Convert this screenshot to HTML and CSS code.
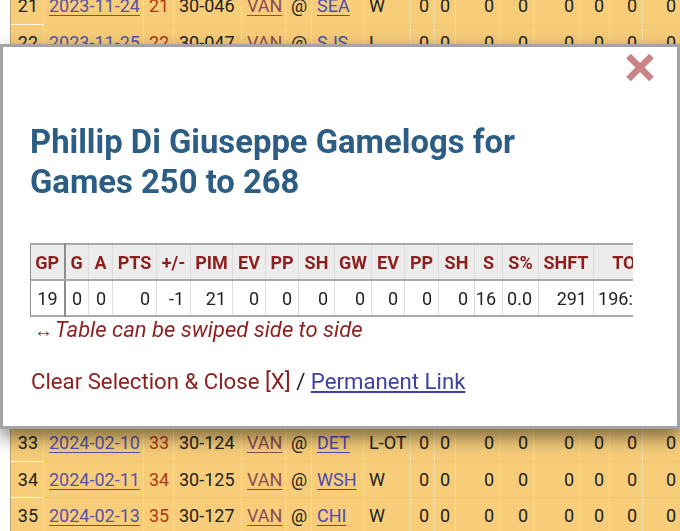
FILE: index.html
```html
<!DOCTYPE html>
<html lang="en">
<head>
<meta charset="utf-8">
<title>Phillip Di Giuseppe Gamelogs</title>
<link rel="stylesheet" href="styles.css">
</head>
<body>
<div class="page">
  <table class="log">
    <colgroup>
      <col class="c1"><col class="c2"><col class="c3"><col class="c4"><col class="c5"><col class="c6"><col class="c7"><col class="c8"><col class="c9"><col class="c10"><col class="c11"><col class="c12"><col class="c13"><col class="c14"><col class="c15"><col class="c16"><col class="c17"><col class="c17">
    </colgroup>
    <tbody>
      <tr><td class="num first">21</td><td><a class="date" href="#">2023-11-24</a></td><td class="num red">21</td><td>30-046</td><td><a class="tm" href="#">VAN</a></td><td>@</td><td><a class="opp" href="#">SEA</a></td><td>W</td><td class="num">0</td><td class="num">0</td><td class="num">0</td><td class="num">0</td><td class="num">0</td><td class="num">0</td><td class="num">0</td><td class="num">0</td><td class="num">0</td><td class="num">0</td></tr>
      <tr><td class="num first">22</td><td><a class="date" href="#">2023-11-25</a></td><td class="num red">22</td><td>30-047</td><td><a class="tm" href="#">VAN</a></td><td>@</td><td><a class="opp" href="#">SJS</a></td><td>L</td><td class="num">0</td><td class="num">0</td><td class="num">0</td><td class="num">0</td><td class="num">0</td><td class="num">0</td><td class="num">0</td><td class="num">0</td><td class="num">0</td><td class="num">0</td></tr>
      <tr><td class="num first">23</td><td><a class="date" href="#">2023-11-28</a></td><td class="num red">23</td><td>30-058</td><td><a class="tm" href="#">VAN</a></td><td></td><td><a class="opp" href="#">CHI</a></td><td>W</td><td class="num">0</td><td class="num">0</td><td class="num">0</td><td class="num">0</td><td class="num">0</td><td class="num">0</td><td class="num">0</td><td class="num">0</td><td class="num">0</td><td class="num">0</td></tr>
      <tr><td class="num first">24</td><td><a class="date" href="#">2023-11-30</a></td><td class="num red">24</td><td>30-068</td><td><a class="tm" href="#">VAN</a></td><td></td><td><a class="opp" href="#">LAK</a></td><td>L</td><td class="num">0</td><td class="num">0</td><td class="num">0</td><td class="num">0</td><td class="num">0</td><td class="num">0</td><td class="num">0</td><td class="num">0</td><td class="num">0</td><td class="num">0</td></tr>
      <tr><td class="num first">25</td><td><a class="date" href="#">2023-12-02</a></td><td class="num red">25</td><td>30-075</td><td><a class="tm" href="#">VAN</a></td><td></td><td><a class="opp" href="#">VGK</a></td><td>W</td><td class="num">0</td><td class="num">0</td><td class="num">0</td><td class="num">0</td><td class="num">0</td><td class="num">0</td><td class="num">0</td><td class="num">0</td><td class="num">0</td><td class="num">0</td></tr>
      <tr><td class="num first">26</td><td><a class="date" href="#">2023-12-05</a></td><td class="num red">26</td><td>30-083</td><td><a class="tm" href="#">VAN</a></td><td>@</td><td><a class="opp" href="#">NJD</a></td><td>W</td><td class="num">0</td><td class="num">0</td><td class="num">0</td><td class="num">0</td><td class="num">0</td><td class="num">0</td><td class="num">0</td><td class="num">0</td><td class="num">0</td><td class="num">0</td></tr>
      <tr><td class="num first">27</td><td><a class="date" href="#">2023-12-07</a></td><td class="num red">27</td><td>30-091</td><td><a class="tm" href="#">VAN</a></td><td>@</td><td><a class="opp" href="#">NYI</a></td><td>L</td><td class="num">0</td><td class="num">0</td><td class="num">0</td><td class="num">0</td><td class="num">0</td><td class="num">0</td><td class="num">0</td><td class="num">0</td><td class="num">0</td><td class="num">0</td></tr>
      <tr><td class="num first">28</td><td><a class="date" href="#">2023-12-09</a></td><td class="num red">28</td><td>30-099</td><td><a class="tm" href="#">VAN</a></td><td>@</td><td><a class="opp" href="#">NYR</a></td><td>W</td><td class="num">0</td><td class="num">0</td><td class="num">0</td><td class="num">0</td><td class="num">0</td><td class="num">0</td><td class="num">0</td><td class="num">0</td><td class="num">0</td><td class="num">0</td></tr>
      <tr><td class="num first">29</td><td><a class="date" href="#">2024-01-27</a></td><td class="num red">29</td><td>30-104</td><td><a class="tm" href="#">VAN</a></td><td></td><td><a class="opp" href="#">COL</a></td><td>W</td><td class="num">0</td><td class="num">0</td><td class="num">0</td><td class="num">0</td><td class="num">0</td><td class="num">0</td><td class="num">0</td><td class="num">0</td><td class="num">0</td><td class="num">0</td></tr>
      <tr><td class="num first">30</td><td><a class="date" href="#">2024-02-03</a></td><td class="num red">30</td><td>30-110</td><td><a class="tm" href="#">VAN</a></td><td></td><td><a class="opp" href="#">TOR</a></td><td>L</td><td class="num">0</td><td class="num">0</td><td class="num">0</td><td class="num">0</td><td class="num">0</td><td class="num">0</td><td class="num">0</td><td class="num">0</td><td class="num">0</td><td class="num">0</td></tr>
      <tr><td class="num first">31</td><td><a class="date" href="#">2024-02-06</a></td><td class="num red">31</td><td>30-114</td><td><a class="tm" href="#">VAN</a></td><td>@</td><td><a class="opp" href="#">TOR</a></td><td>W</td><td class="num">0</td><td class="num">0</td><td class="num">0</td><td class="num">0</td><td class="num">0</td><td class="num">0</td><td class="num">0</td><td class="num">0</td><td class="num">0</td><td class="num">0</td></tr>
      <tr><td class="num first">32</td><td><a class="date" href="#">2024-02-08</a></td><td class="num red">32</td><td>30-119</td><td><a class="tm" href="#">VAN</a></td><td>@</td><td><a class="opp" href="#">MTL</a></td><td>W</td><td class="num">0</td><td class="num">0</td><td class="num">0</td><td class="num">0</td><td class="num">0</td><td class="num">0</td><td class="num">0</td><td class="num">0</td><td class="num">0</td><td class="num">0</td></tr>
      <tr><td class="num first">33</td><td><a class="date" href="#">2024-02-10</a></td><td class="num red">33</td><td>30-124</td><td><a class="tm" href="#">VAN</a></td><td>@</td><td><a class="opp" href="#">DET</a></td><td>L-OT</td><td class="num">0</td><td class="num">0</td><td class="num">0</td><td class="num">0</td><td class="num">0</td><td class="num">0</td><td class="num">0</td><td class="num">0</td><td class="num">0</td><td class="num">0</td></tr>
      <tr><td class="num first">34</td><td><a class="date" href="#">2024-02-11</a></td><td class="num red">34</td><td>30-125</td><td><a class="tm" href="#">VAN</a></td><td>@</td><td><a class="opp" href="#">WSH</a></td><td>W</td><td class="num">0</td><td class="num">0</td><td class="num">0</td><td class="num">0</td><td class="num">0</td><td class="num">0</td><td class="num">0</td><td class="num">0</td><td class="num">0</td><td class="num">0</td></tr>
      <tr><td class="num first">35</td><td><a class="date" href="#">2024-02-13</a></td><td class="num red">35</td><td>30-127</td><td><a class="tm" href="#">VAN</a></td><td>@</td><td><a class="opp" href="#">CHI</a></td><td>W</td><td class="num">0</td><td class="num">0</td><td class="num">0</td><td class="num">0</td><td class="num">0</td><td class="num">0</td><td class="num">0</td><td class="num">0</td><td class="num">0</td><td class="num">0</td></tr>
    </tbody>
  </table>
</div>

<div class="modal">
  <div class="modal-top">
    <a class="close" href="#" aria-label="Close">
      <svg width="28" height="29" viewBox="0 0 28 29"><path d="M2.5 3 L25.5 26 M25.5 3 L2.5 26" stroke="#c98585" stroke-width="6.5" fill="none"/></svg>
    </a>
  </div>
  <h2 class="title">Phillip Di Giuseppe Gamelogs for Games 250 to 268</h2>
  <div class="scroller">
    <table class="sum">
      <colgroup>
        <col class="w34"><col class="w24"><col class="w24"><col class="w44"><col class="w34"><col class="w42"><col class="w33"><col class="w33"><col class="w36"><col class="w37"><col class="w33"><col class="w34"><col class="w36"><col class="w28"><col class="w36"><col class="w55"><col class="w66">
      </colgroup>
      <thead>
        <tr><th class="gp">GP</th><th>G</th><th>A</th><th>PTS</th><th>+/-</th><th>PIM</th><th>EV</th><th>PP</th><th>SH</th><th>GW</th><th>EV</th><th>PP</th><th>SH</th><th>S</th><th>S%</th><th>SHFT</th><th class="toi">TOI</th></tr>
      </thead>
      <tbody>
        <tr><td class="gp">19</td><td>0</td><td>0</td><td>0</td><td>-1</td><td>21</td><td>0</td><td>0</td><td>0</td><td>0</td><td>0</td><td>0</td><td>0</td><td>16</td><td>0.0</td><td>291</td><td class="toi">196:03</td></tr>
      </tbody>
    </table>
  </div>
  <p class="swipe"><span class="arrow">↔</span>Table can be swiped side to side</p>
  <p class="actions"><a class="clear" href="#">Clear Selection &amp; Close [X]</a> / <a class="perm" href="#">Permanent Link</a></p>
</div>
</body>
</html>
```

FILE: styles.css
```css
html, body {
  margin: 0;
  padding: 0;
  background: #ffffff;
  overflow: hidden;
  height: 531px;
}

.page {
  padding-left: 10px;
  margin-top: -12px;
}

.log {
  border-collapse: collapse;
  table-layout: fixed;
  width: 710px;
  font-family: Roboto, "Liberation Sans", sans-serif;
  font-size: 18px;
  color: #222;
  border-left: 1px solid #b9a170;
}

.log .c1 { width: 33px; }
.log .c2 { width: 100px; }
.log .c3 { width: 30px; }
.log .c4 { width: 68px; }
.log .c5 { width: 44px; }
.log .c6 { width: 26px; }
.log .c7 { width: 52px; }
.log .c8 { width: 47px; }
.log .c9 { width: 24px; }
.log .c10 { width: 21px; }
.log .c11 { width: 44px; }
.log .c12 { width: 34px; }
.log .c13 { width: 46px; }
.log .c14 { width: 30px; }
.log .c15 { width: 33px; }
.log .c16 { width: 39px; }
.log .c17 { width: 30px; }

.log td {
  height: 36.4px;
  box-sizing: border-box;
  padding: 0 5px;
  background: #f7cd7a;
  border-right: 1px solid #f2dcaa;
  border-bottom: 1px solid #f0c774;
  white-space: nowrap;
  overflow: hidden;
}

.log td.first {
  border-bottom: 1px dotted #fbf1dc;
}

.log td.num {
  text-align: right;
}

.log td.red {
  color: #ad3a17;
}

.log a {
  text-decoration: underline;
  text-underline-offset: 3px;
}

.log a.date { color: #5753a6; }
.log a.tm { color: #8d4c55; }
.log a.opp { color: #4e4cb2; }

.modal {
  position: fixed;
  top: 44px;
  left: 0;
  width: 680px;
  height: 385px;
  box-sizing: border-box;
  border: 3px solid #a3a3a3;
  background: #ffffff;
  padding: 6px 23px 0 27px;
  box-shadow: 0 8px 18px rgba(0, 0, 0, 0.5);
  font-family: Roboto, "Liberation Sans", sans-serif;
}

.modal-top {
  display: flex;
  justify-content: flex-end;
  height: 29px;
}

.close {
  display: block;
  width: 28px;
  height: 29px;
}

.close svg {
  display: block;
}

.title {
  margin: 40px 0 0;
  font-size: 32.8px;
  line-height: 40px;
  font-weight: 700;
  color: #2c5d85;
  max-width: 540px;
}

.scroller {
  margin-top: 41px;
  width: 603px;
  overflow: hidden;
}

.sum {
  border-collapse: collapse;
  table-layout: fixed;
  width: 629px;
  font-size: 18px;
  color: #222;
  white-space: nowrap;
  border-top: 2px solid #a8a8a8;
  border-bottom: 2px solid #a8a8a8;
  border-left: 1px solid #8c8c8c;
}

.sum .w24 { width: 24px; }
.sum .w28 { width: 28px; }
.sum .w33 { width: 33px; }
.sum .w34 { width: 34px; }
.sum .w36 { width: 36px; }
.sum .w37 { width: 37px; }
.sum .w42 { width: 42px; }
.sum .w44 { width: 44px; }
.sum .w55 { width: 55px; }
.sum .w66 { width: 66px; }

.sum th {
  height: 34px;
  padding: 0;
  background: #ececec;
  color: #8e1f1f;
  font-weight: 700;
  text-align: center;
  border-right: 1px solid #dcdcdc;
  border-bottom: 2px solid #a8a8a8;
  overflow: hidden;
}

.sum td {
  height: 34px;
  padding: 0 6px 0 0;
  text-align: right;
  border-right: 1px solid #dcdcdc;
  overflow: hidden;
}

.sum .gp {
  border-right: 2px solid #8c8c8c;
}

.swipe {
  margin: 0;
  font-size: 22px;
  line-height: 26px;
  font-style: italic;
  color: #8e1f1f;
  padding-left: 4px;
}

.arrow {
  font-style: normal;
  font-size: 19px;
  margin-right: 2px;
}

.actions {
  margin: 24px 0 0;
  padding-left: 1px;
  font-size: 22.2px;
  line-height: 26px;
  color: #222;
}

.actions .clear {
  color: #8a2020;
  text-decoration: none;
}

.actions .perm {
  color: #3f41a4;
  text-decoration: underline;
  text-underline-offset: 2px;
}
```
